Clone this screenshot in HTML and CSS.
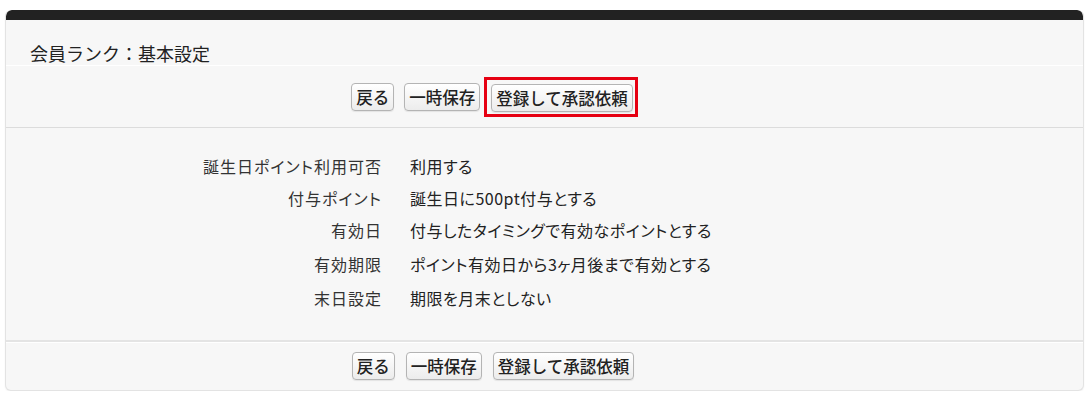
FILE: index.html
```html
<!DOCTYPE html>
<html lang="ja">
<head>
    <meta charset="UTF-8">
    <title>会員ランク：基本設定</title>
    <link rel="stylesheet" href="styles.css">
</head>
<body>
    <div class="panel">
        <div class="panel-bar"></div>
        <h1 class="panel-title">会員ランク：基本設定</h1>

        <div class="actions actions-top">
            <button type="button" class="btn">戻る</button>
            <button type="button" class="btn">一時保存</button>
            <span class="highlight">
                <button type="button" class="btn">登録して承認依頼</button>
            </span>
        </div>

        <div class="details">
            <div class="row"><div class="label">誕生日ポイント利用可否</div><div class="value">利用する</div></div>
            <div class="row"><div class="label">付与ポイント</div><div class="value">誕生日に500pt付与とする</div></div>
            <div class="row"><div class="label">有効日</div><div class="value">付与したタイミングで有効なポイントとする</div></div>
            <div class="row row-tall"><div class="label">有効期限</div><div class="value">ポイント有効日から3ヶ月後まで有効とする</div></div>
            <div class="row"><div class="label">末日設定</div><div class="value">期限を月末としない</div></div>
        </div>

        <div class="actions actions-bottom">
            <button type="button" class="btn">戻る</button>
            <button type="button" class="btn">一時保存</button>
            <button type="button" class="btn">登録して承認依頼</button>
        </div>
    </div>
</body>
</html>
```

FILE: styles.css
```css
body {
    margin: 0;
    padding: 10px 8px 0 5px;
    background-color: #fff;
    font-family: "Noto Sans CJK JP", "Noto Sans", sans-serif;
    color: #222;
}

.panel {
    background-color: #f7f7f7;
    border: 1px solid #e3e3e3;
    border-top: none;
    border-radius: 6px;
    box-shadow: 0 1px 2px rgba(0, 0, 0, 0.06);
    overflow: hidden;
}

.panel-bar {
    height: 10px;
    background-color: #222;
    border-radius: 6px 6px 0 0;
}

.panel-title {
    margin: 0;
    height: 25px;
    padding: 20px 0 0 24px;
    font-size: 18px;
    font-weight: normal;
    line-height: 26px;
    color: #222;
    border-bottom: 1px solid #fff;
}

.actions {
    display: flex;
    justify-content: center;
    align-items: center;
    gap: 10px;
    padding-right: 100px;
}

.actions-top {
    height: 61px;
    border-bottom: 1px solid #dcdcdc;
}

.actions-bottom {
    height: 48px;
    gap: 11px;
    padding-right: 103px;
    border-top: 2px solid #e4e4e4;
    box-shadow: inset 0 1px 0 #fff;
}

.btn {
    height: 28px;
    padding: 0 4px;
    font-family: "Noto Sans CJK JP", sans-serif;
    font-size: 16.5px;
    font-weight: 500;
    line-height: 26px;
    color: #222;
    background: linear-gradient(#ffffff, #ececec);
    border: 1px solid #b4b4b4;
    border-radius: 4px;
    box-shadow: 0 1px 1px rgba(0, 0, 0, 0.08);
    cursor: pointer;
}

.highlight {
    display: inline-flex;
    padding: 4px 2px 2px 4px;
    border: 3px solid #e60012;
    margin-left: -6px;
}

.details {
    padding: 22px 0 26px;
}

.row {
    display: flex;
    align-items: center;
    height: 32px;
    font-size: 16px;
    font-feature-settings: "palt";
}

.row-tall {
    height: 36px;
}

.label {
    width: 376px;
    text-align: right;
    letter-spacing: 1px;
    color: #333;
}

.value {
    padding-left: 28px;
    letter-spacing: 0.5px;
}
```
